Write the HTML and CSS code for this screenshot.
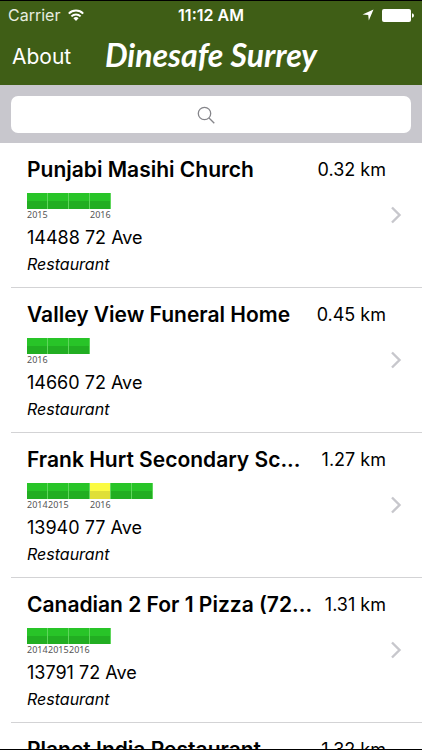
FILE: index.html
```html
<!DOCTYPE html>
<html lang="en">
<head>
<meta charset="utf-8">
<meta name="viewport" content="width=device-width, initial-scale=1">
<title>Dinesafe Surrey</title>
<link rel="stylesheet" href="styles.css">
</head>
<body>
<div class="app">
  <header class="header">
    <div class="status">
      <div class="status-left">
        <span>Carrier</span>
        <svg class="wifi" viewBox="0 0 16 12" aria-hidden="true"><g fill="none" stroke="#fff" stroke-width="2"><path d="M.8 4.6a10.2 10.2 0 0 1 14.4 0"/><path d="M3.4 7.4a6.5 6.5 0 0 1 9.2 0"/></g><path d="M5.4 9.2a3.7 3.7 0 0 1 5.2 0L8 12z" fill="#fff"/></svg>
      </div>
      <span class="clock">11:12 AM</span>
      <div class="status-right">
        <svg class="location" viewBox="0 0 12 12" aria-hidden="true"><path d="M11.5.5 6.800 11.500 6.200 6 .5 5.400z" fill="#fff"/></svg>
        <svg class="battery" viewBox="0 0 32 13" aria-hidden="true"><rect width="29" height="13" rx="2" fill="#fff"/><path d="M30 4.200q2 .4 2 2.300t-2 2.300z" fill="#fff"/></svg>
      </div>
    </div>
    <nav class="navbar">
      <a class="about" href="#about">About</a>
      <h1 class="title">Dinesafe Surrey</h1>
    </nav>
  </header>
  <form class="search" role="search">
    <label class="field">
      <input class="input" type="search" aria-label="Search restaurants">
      <svg class="glass" viewBox="0 0 18 18" aria-hidden="true"><g fill="none" stroke="#85858a" stroke-width="1.3"><circle cx="7.5" cy="7.5" r="6.2"/><path d="m12 12 5.300 5.300"/></g></svg>
    </label>
  </form>
  <ul class="list">
    <li class="row">
      <div class="top"><h2 class="name">Punjabi Masihi Church</h2><span class="distance">0.32 km</span></div>
      <div class="details">
        <div class="info">
          <ol class="history"><li class="check">2015</li><li class="check"></li><li class="check"></li><li class="check">2016</li></ol>
          <p class="address">14488 72 Ave</p>
          <p class="kind">Restaurant</p>
        </div>
        <svg class="chevron" viewBox="0 0 12 18" aria-hidden="true"><path d="m2 1.500 7.500 7.500L2 16.500"/></svg>
      </div>
    </li>
    <li class="row">
      <div class="top"><h2 class="name">Valley View Funeral Home</h2><span class="distance">0.45 km</span></div>
      <div class="details">
        <div class="info">
          <ol class="history"><li class="check">2016</li><li class="check"></li><li class="check"></li></ol>
          <p class="address">14660 72 Ave</p>
          <p class="kind">Restaurant</p>
        </div>
        <svg class="chevron" viewBox="0 0 12 18" aria-hidden="true"><path d="m2 1.500 7.500 7.500L2 16.500"/></svg>
      </div>
    </li>
    <li class="row">
      <div class="top"><h2 class="name">Frank Hurt Secondary Sc...</h2><span class="distance">1.27 km</span></div>
      <div class="details">
        <div class="info">
          <ol class="history"><li class="check">2014</li><li class="check">2015</li><li class="check"></li><li class="check warn">2016</li><li class="check"></li><li class="check"></li></ol>
          <p class="address">13940 77 Ave</p>
          <p class="kind">Restaurant</p>
        </div>
        <svg class="chevron" viewBox="0 0 12 18" aria-hidden="true"><path d="m2 1.500 7.500 7.500L2 16.500"/></svg>
      </div>
    </li>
    <li class="row">
      <div class="top"><h2 class="name">Canadian 2 For 1 Pizza (72...</h2><span class="distance">1.31 km</span></div>
      <div class="details">
        <div class="info">
          <ol class="history"><li class="check">2014</li><li class="check">2015</li><li class="check">2016</li><li class="check"></li></ol>
          <p class="address">13791 72 Ave</p>
          <p class="kind">Restaurant</p>
        </div>
        <svg class="chevron" viewBox="0 0 12 18" aria-hidden="true"><path d="m2 1.500 7.500 7.500L2 16.500"/></svg>
      </div>
    </li>
    <li class="row">
      <div class="top"><h2 class="name">Planet India Restaurant</h2><span class="distance">1.32 km</span></div>
    </li>
  </ul>
</div>
</body>
</html>
```
FILE: styles.css
```css
* { box-sizing: border-box; }

body {
  margin: 0;
  background: #fff;
  color: #000;
  font-family: Inter, "Liberation Sans", sans-serif;
}

h1, h2, p, ul, ol { margin: 0; padding: 0; }
ul, ol { list-style: none; }
svg { display: block; flex: none; }

.app {
  display: flex;
  flex-direction: column;
  height: 100vh;
  overflow: hidden;
  border-top: 1px solid #000;
  border-bottom: 1px solid #000;
}

.header {
  flex: none;
  background: #3f5e16;
  color: #fff;
}

.status {
  display: grid;
  grid-template-columns: 1fr auto 1fr;
  align-items: center;
  height: 28px;
  padding: 0 8px;
  font-size: 16px;
}

.status-left, .status-right {
  display: flex;
  align-items: center;
  gap: 8px;
}

.status-left { color: #e8ede0; }
.status-right { justify-content: flex-end; }
.clock { font-weight: 600; }
.wifi { width: 16px; height: 12px; }
.location { width: 12px; height: 12px; }
.battery { width: 32px; height: 13px; }

.navbar {
  display: grid;
  grid-template-columns: 1fr auto 1fr;
  align-items: center;
  height: 56px;
  padding: 0 12px 4px;
}

.about {
  padding-top: 2px;
  color: #fff;
  font-size: 21px;
  text-decoration: none;
}

.title {
  font-family: Lato, "Liberation Sans", sans-serif;
  font-size: 32px;
  font-style: italic;
  font-weight: 700;
  line-height: 40px;
}

.search {
  flex: none;
  padding: 11px 11px 10px;
  background: #c8c7cd;
}

.field {
  display: grid;
  place-items: center;
}

.input, .glass { grid-area: 1 / 1; }

.input {
  width: 100%;
  height: 37px;
  padding: 0 12px;
  border: 0;
  border-radius: 7px;
  background: #fff;
  font: inherit;
}

.glass {
  width: 18px;
  height: 18px;
  margin-right: 10px;
  pointer-events: none;
}

.list { padding-left: 11px; }

.row {
  height: 145px;
  padding: 12px 20px 0 16px;
  border-bottom: 1px solid #d3d3d5;
}

.top {
  display: flex;
  justify-content: space-between;
  gap: 12px;
  padding-right: 16px;
  line-height: 30px;
}

.name {
  min-width: 0;
  overflow: hidden;
  font-size: 21px;
  font-weight: 600;
  text-overflow: ellipsis;
  white-space: nowrap;
}

.distance {
  flex: none;
  font-size: 18px;
}

.details {
  display: flex;
  align-items: flex-start;
  justify-content: space-between;
}

.info { padding-top: 8px; }

.history {
  display: flex;
  height: 32px;
}

.check {
  width: 21px;
  padding-top: 17px;
  border-right: 1px solid;
  border-image: linear-gradient(#5fd65c 16px, transparent 16px) 1;
  background: linear-gradient(#28c428 8px, #22ae22 8px) no-repeat 0 0 / 100% 16px;
  color: #555;
  font-family: "Noto Sans", sans-serif;
  font-size: 9px;
  line-height: 10px;
  text-align: center;
}

.warn { background-image: linear-gradient(#fbfb42 8px, #dfdf38 8px); }

.address {
  font-size: 18px;
  line-height: 26px;
}

.kind {
  padding-top: 2px;
  font-size: 16px;
  font-style: italic;
  line-height: 22px;
}

.chevron {
  width: 12px;
  height: 18px;
  margin-top: 21px;
  fill: none;
  stroke: #c7c7cc;
  stroke-width: 2.4;
}
```
